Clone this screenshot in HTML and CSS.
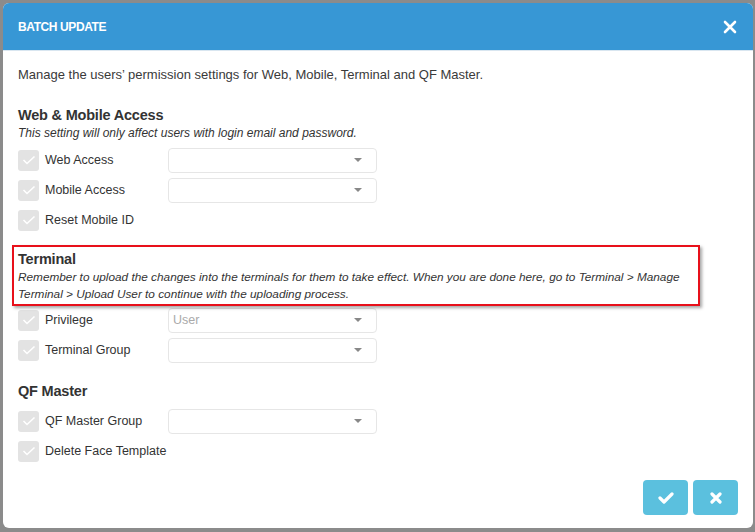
FILE: index.html
```html
<!DOCTYPE html>
<html>
<head>
<meta charset="utf-8">
<link rel="stylesheet" href="styles.css">
</head>
<body>
<div class="modal">
  <div class="modal-header">
    <span class="title">BATCH UPDATE</span>
    <svg class="close" width="14" height="14" viewBox="0 0 14 14"><path d="M2 2 L12 12 M12 2 L2 12" stroke="#fff" stroke-width="2.6" stroke-linecap="round"/></svg>
  </div>
  <div class="modal-body">
    <p class="intro">Manage the users’ permission settings for Web, Mobile, Terminal and QF Master.</p>

    <h3 class="sec-title first">Web &amp; Mobile Access</h3>
    <p class="note">This setting will only affect users with login email and password.</p>
    <div class="row"><span class="cb"><svg width="14" height="10" viewBox="0 0 14 10"><path d="M1.5 5 L5 8.5 L12.5 1.5" stroke="#fff" stroke-width="1.6" fill="none"/></svg></span><span class="label">Web Access</span><div class="select"><span class="val"></span><span class="caret"></span></div></div>
    <div class="row"><span class="cb"><svg width="14" height="10" viewBox="0 0 14 10"><path d="M1.5 5 L5 8.5 L12.5 1.5" stroke="#fff" stroke-width="1.6" fill="none"/></svg></span><span class="label">Mobile Access</span><div class="select"><span class="val"></span><span class="caret"></span></div></div>
    <div class="row"><span class="cb"><svg width="14" height="10" viewBox="0 0 14 10"><path d="M1.5 5 L5 8.5 L12.5 1.5" stroke="#fff" stroke-width="1.6" fill="none"/></svg></span><span class="label">Reset Mobile ID</span></div>

    <h3 class="sec-title term">Terminal</h3>
    <p class="note note-wide">Remember to upload the changes into the terminals for them to take effect. When you are done here, go to Terminal &gt; Manage Terminal &gt; Upload User to continue with the uploading process.</p>
    <div class="row"><span class="cb"><svg width="14" height="10" viewBox="0 0 14 10"><path d="M1.5 5 L5 8.5 L12.5 1.5" stroke="#fff" stroke-width="1.6" fill="none"/></svg></span><span class="label">Privilege</span><div class="select"><span class="val placeholder">User</span><span class="caret"></span></div></div>
    <div class="row"><span class="cb"><svg width="14" height="10" viewBox="0 0 14 10"><path d="M1.5 5 L5 8.5 L12.5 1.5" stroke="#fff" stroke-width="1.6" fill="none"/></svg></span><span class="label">Terminal Group</span><div class="select"><span class="val"></span><span class="caret"></span></div></div>

    <h3 class="sec-title qf">QF Master</h3>
    <div class="row"><span class="cb"><svg width="14" height="10" viewBox="0 0 14 10"><path d="M1.5 5 L5 8.5 L12.5 1.5" stroke="#fff" stroke-width="1.6" fill="none"/></svg></span><span class="label">QF Master Group</span><div class="select"><span class="val"></span><span class="caret"></span></div></div>
    <div class="row"><span class="cb"><svg width="14" height="10" viewBox="0 0 14 10"><path d="M1.5 5 L5 8.5 L12.5 1.5" stroke="#fff" stroke-width="1.6" fill="none"/></svg></span><span class="label">Delete Face Template</span></div>
  </div>
  <div class="modal-footer">
    <button class="btn"><svg width="16" height="12" viewBox="0 0 16 12"><path d="M2 6 L6 10 L14 2" stroke="#fff" stroke-width="3.2" fill="none" stroke-linecap="round" stroke-linejoin="round"/></svg></button>
    <button class="btn"><svg width="12" height="12" viewBox="0 0 12 12"><path d="M2 2 L10 10 M10 2 L2 10" stroke="#fff" stroke-width="3.2" stroke-linecap="round"/></svg></button>
  </div>
  <div class="highlight"></div>
</div>
</body>
</html>
```

FILE: styles.css
```css
html, body {
  margin: 0;
  padding: 0;
}
body {
  background: #8b8b8b;
  font-family: "Liberation Sans", Arial, sans-serif;
  color: #333;
  width: 755px;
  height: 532px;
  overflow: hidden;
}
.modal {
  position: relative;
  margin: 3px 0 0 3px;
  width: 750px;
  height: 525px;
  background: #fff;
  border-radius: 6px;
  overflow: hidden;
  display: flex;
  flex-direction: column;
}
.modal-header {
  height: 48px;
  background: #3797d5;
  border-bottom: 1px solid #d9e6f0;
  display: flex;
  align-items: center;
  justify-content: space-between;
  padding: 0 16px 0 15px;
  box-sizing: border-box;
  flex: none;
}
.title {
  color: #fff;
  font-weight: bold;
  font-size: 12px;
  letter-spacing: -0.4px;
}
.close {
  display: block;
}
.modal-body {
  padding: 14px 15px 0 15px;
  flex: 1;
}
.intro {
  margin: 0;
  font-size: 13px;
  line-height: 20px;
  color: #3a3a3a;
}
.sec-title {
  margin: 0;
  font-size: 14.5px;
  line-height: 20px;
  font-weight: bold;
  color: #333;
  letter-spacing: -0.2px;
}
.sec-title.first { margin-top: 20px; }
.sec-title.term { margin-top: 14px; }
.sec-title.qf { margin-top: 16px; margin-bottom: 5px; }
.note {
  margin: 0 0 4px 0;
  font-size: 12px;
  line-height: 16px;
  font-style: italic;
  color: #333;
}
.note-wide {
  width: 692px;
  font-size: 11.8px;
  line-height: 17px;
  margin-bottom: 2px;
}
.row {
  height: 30px;
  display: flex;
  align-items: center;
}
.cb {
  width: 21px;
  height: 21px;
  border-radius: 3px;
  background: #e3e3e3;
  display: flex;
  align-items: center;
  justify-content: center;
  flex: none;
}
.cb svg { display: block; }
.label {
  margin-left: 6px;
  width: 123px;
  flex: none;
  white-space: nowrap;
  font-size: 12.5px;
  color: #333;
}
.select {
  width: 209px;
  height: 25px;
  box-sizing: border-box;
  border: 1px solid #e6e6e6;
  border-radius: 4px;
  display: flex;
  align-items: center;
  justify-content: space-between;
  padding: 0 14px 0 4px;
}
.val {
  font-size: 12.5px;
  color: #aaa;
}
.caret {
  width: 0;
  height: 0;
  border-left: 4px solid transparent;
  border-right: 4px solid transparent;
  border-top: 4px solid #888;
}
.modal-footer {
  flex: none;
  display: flex;
  justify-content: flex-end;
  gap: 5px;
  padding: 0 15px 13px 0;
}
.btn {
  width: 45px;
  height: 35px;
  border: none;
  border-radius: 4px;
  background: #5bc0de;
  display: flex;
  align-items: center;
  justify-content: center;
  padding: 0;
}
.highlight {
  position: absolute;
  left: 9px;
  top: 242px;
  width: 688px;
  height: 61px;
  border: 2px solid #e8101a;
  box-sizing: border-box;
  box-shadow: 2px 2px 3px rgba(0,0,0,0.35);
  pointer-events: none;
}
```
